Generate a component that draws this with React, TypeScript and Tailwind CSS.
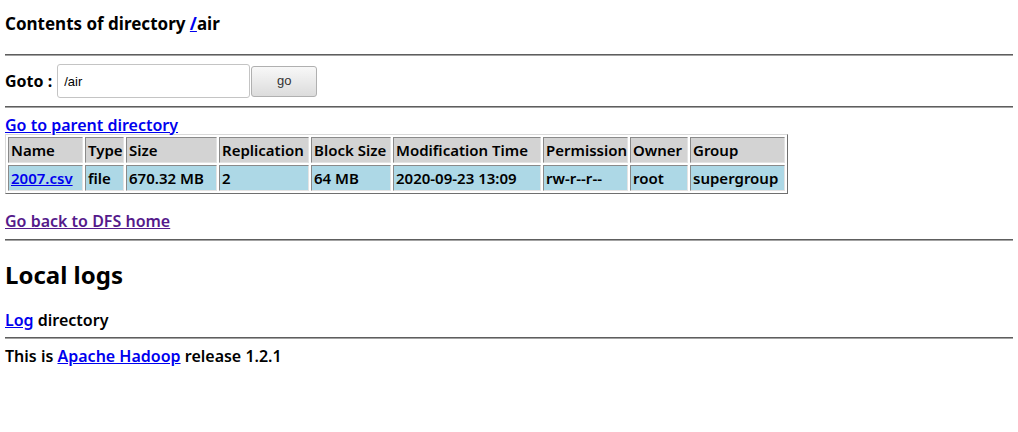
const font = "font-['Noto_Sans',_'Noto_Sans_CJK_KR',_sans-serif]";

const Rule = () => (
  <div className="h-[2px] border-t border-t-[#5e5e5e] border-b border-b-[#a3a3a3]" />
);

const headers = [
  { label: "Name", w: "w-[75px]" },
  { label: "Type", w: "w-[39px]" },
  { label: "Size", w: "w-[91px]" },
  { label: "Replication", w: "w-[90px]" },
  { label: "Block Size", w: "w-[80px]" },
  { label: "Modification Time", w: "w-[148px]" },
  { label: "Permission", w: "w-[85px]" },
  { label: "Owner", w: "w-[58px]" },
  { label: "Group", w: "w-[95px]" },
];

const row = ["2007.csv", "file", "670.32 MB", "2", "64 MB", "2020-09-23 13:09", "rw-r--r--", "root", "supergroup"];

const cell =
  "h-[26px] px-[2px] py-0 text-left align-middle whitespace-nowrap border border-t-[#8a8a8a] border-l-[#8a8a8a] border-b-[#e3e3e3] border-r-[#e3e3e3]";

export default function App() {
  return (
    <div className={`${font} w-[1018px] h-[432px] bg-white text-black px-[5px] font-semibold text-[16px]`}>
      <h3 className="pt-[13px] h-[54px] text-[17px] leading-[22px] font-bold">
        Contents of directory{" "}
        <a href="#" className="text-[#0000ee] underline">/</a>air
      </h3>
      <Rule />
      <div className="flex items-center h-[50px]">
        <span className="font-bold mr-[5px]">Goto :</span>
        <input
          readOnly
          value="/air"
          className="w-[193px] h-[34px] border border-[#c4c4c4] rounded-[3px] px-[6px] text-[13px] font-normal font-['Liberation_Sans',_sans-serif] outline-none"
        />
        <button className="ml-[1px] w-[66px] h-[31px] border border-[#b0b0b0] rounded-[3px] bg-gradient-to-b from-[#f8f8f8] to-[#dcdcdc] text-[13px] font-normal text-[#333] font-['Liberation_Sans',_sans-serif]">
          go
        </button>
      </div>
      <Rule />
      <div className="h-[18px] mt-[8px] leading-[18px]">
        <a href="#" className="text-[#0000ee] underline">Go to parent directory</a>
      </div>
      <table className="table-fixed w-[783px] text-[15px] border-separate border-spacing-[2px] border border-t-[#d9d9d9] border-l-[#d9d9d9] border-b-[#6f6f6f] border-r-[#6f6f6f]">
        <tbody>
          <tr className="bg-[#d3d3d3]">
            {headers.map((h) => (
              <th key={h.label} className={`${cell} ${h.w} font-semibold`}>{h.label}</th>
            ))}
          </tr>
          <tr className="bg-[#add8e6]">
            {row.map((v, i) => (
              <td key={i} className={`${cell} ${headers[i].w}`}>
                {i === 0 ? <a href="#" className="text-[#0000ee] underline">{v}</a> : v}
              </td>
            ))}
          </tr>
        </tbody>
      </table>
      <div className="h-[45px] pt-[17px] leading-[20px]">
        <a href="#" className="text-[#551a8b] underline">Go back to DFS home</a>
      </div>
      <Rule />
      <h2 className="text-[24px] font-bold leading-[28px] pt-[20px] h-[66px]">Local logs</h2>
      <div className="leading-[20px] h-[27px] mt-[3px]">
        <a href="#" className="text-[#0000ee] underline">Log</a> directory
      </div>
      <Rule />
      <div className="leading-[20px] pt-[7px]">
        This is <a href="#" className="text-[#0000ee] underline">Apache Hadoop</a> release 1.2.1
      </div>
    </div>
  );
}
